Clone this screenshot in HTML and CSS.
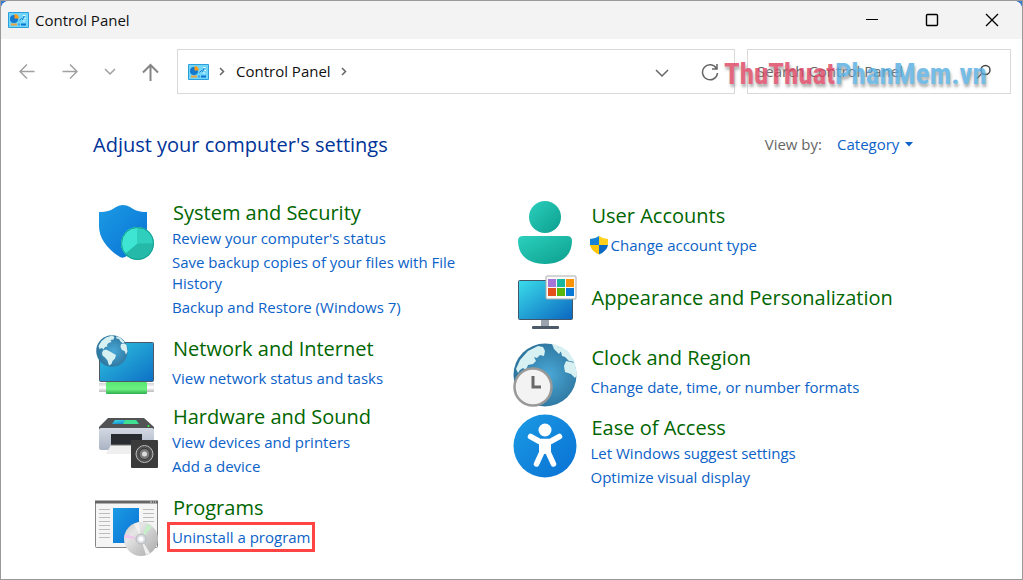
FILE: index.html
```html
<!DOCTYPE html>
<html lang="en">
<head>
<meta charset="utf-8">
<title>Control Panel</title>
<meta name="viewport" content="width=device-width, initial-scale=1">
<link rel="stylesheet" href="styles.css">
</head>
<body>
<svg class="defs" aria-hidden="true">
  <defs>
    <linearGradient id="blue" x1="0" y1="0" x2="1" y2="1"><stop offset="0" stop-color="#1c9be4"/><stop offset="1" stop-color="#0870d4"/></linearGradient>
    <linearGradient id="screen" x1="0" y1="0" x2="1" y2="1"><stop offset="0" stop-color="#3addea"/><stop offset="1" stop-color="#0b66c0"/></linearGradient>
    <linearGradient id="netscreen" x1="0" y1="0" x2="1" y2="1"><stop offset="0" stop-color="#31c6df"/><stop offset="1" stop-color="#0d70c6"/></linearGradient>
    <linearGradient id="teal" x1="0" y1="0" x2="1" y2="1"><stop offset="0" stop-color="#2bd0bd"/><stop offset="1" stop-color="#0c9e8e"/></linearGradient>
    <linearGradient id="cable" x1="0" y1="0" x2="0" y2="1"><stop offset="0" stop-color="#58e873"/><stop offset=".6" stop-color="#6cf080"/><stop offset="1" stop-color="#2fae4c"/></linearGradient>
    <linearGradient id="plug" x1="0" y1="0" x2="0" y2="1"><stop offset="0" stop-color="#d0d2d5"/><stop offset=".5" stop-color="#fff"/><stop offset="1" stop-color="#bbb"/></linearGradient>
    <linearGradient id="body" x1="0" y1="0" x2="0" y2="1"><stop offset="0" stop-color="#d4dae4"/><stop offset="1" stop-color="#aab3c3"/></linearGradient>
    <linearGradient id="disc" x1="0" y1="0" x2="1" y2="1"><stop offset="0" stop-color="#bfc0c1"/><stop offset=".3" stop-color="#e6e6e6"/><stop offset=".6" stop-color="#c9c9c9"/><stop offset="1" stop-color="#a9a9a9"/></linearGradient>
    <radialGradient id="ocean" cx=".55" cy=".5" r=".6"><stop offset="0" stop-color="#4aa8d6"/><stop offset="1" stop-color="#2a6f98"/></radialGradient>
    <symbol id="cp" viewBox="0 0 21 16">
      <rect width="21" height="16" rx="1" fill="#2b9fdb"/><rect x="1" y="1" width="19" height="14" fill="#72d5fa"/>
      <circle cx="6" cy="7" r="4" fill="#1279cf"/><path d="M6.500 6.500V2a4.500 4.500 0 0 1 4.300 4.500z" fill="#ff9d18"/>
      <path d="M11.500 8.500l2-2 1 1 2-4" fill="none" stroke="#1279cf"/><path d="M15 3.500h2.500m-1 3H18m-3 2.500h2" stroke="#e9f8ff"/>
      <path d="M3 12.500h6" stroke="#e9a23d" stroke-width="2"/><path d="M10.500 12.500h1m1.500 0h5" stroke="#0874d1" stroke-width="2"/>
    </symbol>
  </defs>
</svg>
<div class="window">
  <header class="titlebar">
    <svg class="app-icon" aria-hidden="true"><use href="#cp"/></svg>
    <span class="window-title">Control Panel</span>
    <div class="captions">
      <button aria-label="Minimize"><svg width="14" height="14"><path d="M1 6.500h12" stroke="#000" stroke-width="1"/></svg></button>
      <button aria-label="Maximize"><svg width="14" height="14" fill="none"><rect x="1.500" y="1.500" width="11" height="11" rx="1" stroke="#000" stroke-width="1.400"/></svg></button>
      <button aria-label="Close"><svg width="14" height="14"><path d="M1 1l12 12M13 1L1 13" stroke="#000" stroke-width="1.300"/></svg></button>
    </div>
  </header>

  <div class="toolbar">
    <nav class="history" aria-label="History">
      <button aria-label="Back"><svg width="18" height="18"><path d="M15.500 8.500H1m7-7l-7 7 7 7" stroke="#a0a0a0"/></svg></button>
      <button aria-label="Forward"><svg width="18" height="18"><path d="M2.500 8.500H17m-7-7l7 7-7 7" stroke="#a0a0a0"/></svg></button>
      <button aria-label="Recent locations"><svg width="18" height="18"><path d="M4 6l5 5 5-5" stroke="#a0a0a0"/></svg></button>
      <button aria-label="Up"><svg width="18" height="18"><path d="M8.500 18V2M1 9.500L8.500 2 16 9.500" stroke="#858585" stroke-width="2"/></svg></button>
    </nav>
    <div class="address">
      <svg class="app-icon" aria-hidden="true"><use href="#cp"/></svg>
      <svg class="crumb-arrow" viewBox="0 0 8 10"><path d="M2 1l3.500 3.500L2 8"/></svg>
      <a class="crumb" href="#">Control Panel</a>
      <svg class="crumb-arrow" viewBox="0 0 8 10"><path d="M2 1l3.500 3.500L2 8"/></svg>
      <div class="address-actions">
        <button aria-label="Previous locations"><svg width="18" height="18"><path d="M3 7l6 6 6-6" stroke="#666"/></svg></button>
        <button aria-label="Refresh"><svg width="18" height="18"><path d="M15.500 5.500A7.500 7.500 0 1 0 16.500 10M16 1v5h-5" stroke="#666"/></svg></button>
      </div>
    </div>
    <div class="search">
      <input type="search" aria-label="Search Control Panel" placeholder="Search Control Panel">
      <svg width="16" height="16" aria-hidden="true"><circle cx="9.500" cy="6" r="4.500"/><path d="M6 9.500L1 14.500"/></svg>
      <div class="watermark"><span>ThuThuat</span><span class="second">PhanMem.vn</span></div>
    </div>
  </div>

  <main>
    <div class="heading">
      <h1>Adjust your computer's settings</h1>
      <div class="view-by">
        <label for="view">View by:</label>
        <select id="view"><option>Category</option></select>
        <svg width="8" height="5" aria-hidden="true"><path d="M0 0h8L4 4.500z" fill="#0b62c8"/></svg>
      </div>
    </div>

    <div class="categories">
      <div class="column">
        <section class="category roomy">
          <svg class="icon" viewBox="0 0 64 64" aria-hidden="true">
            <path d="M5 13c8 0 13-2 17-5q7-4 14 0c4 3 9 5 17 5v18c0 12-10 21-22 27-2 1-3 1-5 0C13 50 5 39 5 27z" fill="url(#blue)"/>
            <circle cx="43.500" cy="44.500" r="16.500" fill="#24b9a8"/><path d="M43.500 44.500L31 55a16.500 16.500 0 0 1 12.500-27z" fill="#3ee5d2"/><path d="M43.500 44.500V28A16.500 16.500 0 0 1 60 44.500z" fill="#2fcebd"/><circle cx="43.500" cy="44.500" r="16" fill="none" stroke="#159f91"/>
          </svg>
          <div class="text">
            <h2><a href="#">System and Security</a></h2>
            <ul><li><a href="#">Review your computer's status</a></li><li><a href="#">Save backup copies of your files with File History</a></li><li><a href="#">Backup and Restore (Windows 7)</a></li></ul>
          </div>
        </section>
        <section class="category single">
          <svg class="icon" viewBox="0 0 64 64" aria-hidden="true">
            <rect x="5.500" y="8.500" width="54" height="39" rx="1" fill="url(#netscreen)" stroke="#505866"/>
            <rect x="5" y="49" width="55" height="9" fill="url(#plug)"/><rect x="12" y="48" width="41" height="12" rx="1" fill="url(#cable)"/>
            <svg x="2" y="1" width="32" height="32" viewBox="0 0 64 64">
              <circle cx="32" cy="32" r="31.500" fill="url(#ocean)"/>
              <path d="M5 22l6-10 9-7 12-4 5 3-2 5-6 1 2 4-6 2-3 4 1 3-5 1-3 5-3-3-5 2zM14 31l6-2 8 4 5 3 7 4-2 7-5 5-2 6-5 3-3-10-5-6-5-4-1-5zM40 3l8 2 9 9-3 3-5-4-3-5-5-1zM50 18l7-1 4 3 2 13-3 6-3-7-5-2-3-6z" fill="#d7f0f2"/>
            </svg>
          </svg>
          <div class="text"><h2><a href="#">Network and Internet</a></h2><ul><li><a href="#">View network status and tasks</a></li></ul></div>
        </section>
        <section class="category low roomy">
          <svg class="icon" viewBox="0 0 64 64" aria-hidden="true">
            <path d="M14 7h36l10 9v3H5v-3z" fill="#515355"/><path d="M21 9h21l3 4H18z" fill="url(#screen)"/><path d="M31 9h11l3 4H29z" fill="#40df91"/><circle cx="54.500" cy="15" r="1" fill="#3eff50"/>
            <rect x="5" y="17" width="55" height="22" rx="2" fill="url(#body)"/><rect x="17" y="23" width="31" height="16" fill="#292c31"/><path d="M17 34h28v9H12z" fill="#efefef"/><path d="M17 34h30" stroke="#777"/>
            <rect x="37" y="29" width="27" height="28" rx="1" fill="#3b3b3b"/><circle cx="50.500" cy="43" r="8.500" fill="#535353" stroke="#b8b8b8"/><circle cx="50.500" cy="43" r="5.500" fill="#7b7b7b" stroke="#333"/><circle cx="50.500" cy="43" r="2.500" fill="#ddd"/>
          </svg>
          <div class="text"><h2><a href="#">Hardware and Sound</a></h2><ul><li><a href="#">View devices and printers</a></li><li><a href="#">Add a device</a></li></ul></div>
        </section>
        <section class="category single">
          <svg class="icon" viewBox="0 0 64 64" aria-hidden="true">
            <rect x="1.500" y="8.500" width="62" height="46" rx="1" fill="#f5f5f5" stroke="#858585"/><path d="M1 9h63" stroke="#666" stroke-width="3"/><path d="M56 9h2m1 0h1m1 0h1" stroke="#ddd"/>
            <path d="M5 16.500h11M5 20.500h11M5 24.500h11M5 28.500h11M5 32.500h11M5 36.500h11M5 40.500h11M5 44.500h11M49 16.500h11M49 20.500h11M49 24.500h11M49 28.500h11" stroke="#bcbcbc"/>
            <rect x="19" y="15" width="26" height="35" fill="url(#blue)"/>
            <circle cx="47" cy="46" r="17" fill="url(#disc)"/><path d="M47 46L31 41l-1 4z" fill="#efc5ec"/><path d="M47 46l6-15 5 3z" fill="#c5efc9"/><path d="M47 46l-7-15 5-2zM47 46l5 16 4-2z" fill="#f0f0f0"/><circle cx="47" cy="46" r="5" fill="#d8dcdf" stroke="#b5b8ba"/><circle cx="47" cy="46" r="2.500" fill="#fff"/>
          </svg>
          <div class="text"><h2><a href="#">Programs</a></h2><ul><li><a class="marked" href="#">Uninstall a program</a></li></ul></div>
        </section>
      </div>

      <div class="column second-column">
        <section class="category single">
          <svg class="icon" viewBox="0 0 64 64" aria-hidden="true"><circle cx="32" cy="16" r="16" fill="url(#teal)"/><path d="M10 35h44q5 0 5 5c0 14-10 23-27 23S5 54 5 40q0-5 5-5z" fill="url(#teal)"/></svg>
          <div class="text"><h2><a href="#">User Accounts</a></h2><ul><li class="admin">
            <svg width="20" height="20" viewBox="0 0 20 20" aria-hidden="true"><path d="M10 0Q6 3 1 3v6h9z" fill="#1583d5"/><path d="M10 0q4 3 9 3v6h-9z" fill="#ffd11a"/><path d="M1 9h9v9.500Q2 15 1 9z" fill="#ffc60a"/><path d="M19 9h-9v9.500Q18 15 19 9z" fill="#0a69c5"/></svg>
            <a href="#">Change account type</a></li></ul></div>
        </section>
        <section class="category lone">
          <svg class="icon" viewBox="0 0 64 64" aria-hidden="true">
            <rect x="28" y="47" width="8" height="8" fill="#9aa3ae"/><rect x="19" y="54" width="27" height="3" rx="1" fill="#4c5968"/><rect x="5.500" y="8.500" width="54" height="39" rx="1" fill="url(#screen)" stroke="#44566a"/>
            <rect x="33" y="4" width="30" height="23" rx="1" fill="#fafafa" stroke="#aaa"/><path d="M35 7h8v8h-8z" fill="#a575d8"/><path d="M44 7h8v8h-8z" fill="#18b5a0"/><path d="M53 7h8v8h-8z" fill="#fa9308"/><path d="M35 16h8v8h-8z" fill="#e4501b"/><path d="M44 16h8v8h-8z" fill="#58b50c"/><path d="M53 16h8v8h-8z" fill="#0878d7"/>
          </svg>
          <div class="text"><h2><a href="#">Appearance and Personalization</a></h2></div>
        </section>
        <section class="category single">
          <svg class="icon" viewBox="0 0 64 64" aria-hidden="true">
            <circle cx="32" cy="32" r="31.500" fill="url(#ocean)"/>
            <path d="M3 26l4-9 8-9 10-5 5 1 2 4-1 5-4-1-3 3-3-1 2 4-3 3-5 1-2 5-3-2-3 2-2 3zM39 1l5 1 4 6-2 3-5-5zM47 3l8 5 7 11-6-1-4-4-3-1-1-4-4-3zM53 18l9 2 2 12-2 3-4-4-6-2-1-6z" fill="#d7f0f2"/>
            <circle cx="20" cy="44" r="18.500" fill="#f3f3f3" stroke="#999" stroke-width="2.500"/><path d="M20 33v11h8" fill="none" stroke="#686868" stroke-width="3"/>
          </svg>
          <div class="text"><h2><a href="#">Clock and Region</a></h2><ul><li><a href="#">Change date, time, or number formats</a></li></ul></div>
        </section>
        <section class="category">
          <svg class="icon" viewBox="0 0 64 64" aria-hidden="true"><circle cx="32" cy="32" r="31.500" fill="url(#blue)"/><circle cx="32" cy="16" r="6.500" fill="#fff"/><path d="M17.500 22.500l9 5h11l9-5M29 28v10l-5.500 12M35 28v10l5.500 12" fill="none" stroke="#fff" stroke-width="5.500" stroke-linecap="round" stroke-linejoin="round"/><path d="M26 25h12v14l-6 1-6-1z" fill="#fff"/></svg>
          <div class="text"><h2><a href="#">Ease of Access</a></h2><ul><li><a href="#">Let Windows suggest settings</a></li><li><a href="#">Optimize visual display</a></li></ul></div>
        </section>
      </div>
    </div>
  </main>
</div>
</body>
</html>
```
FILE: styles.css
```css
* { box-sizing: border-box; }
body { margin: 0; border: 1px solid #999; background: #3b78cf; font: 15px/21px "Open Sans", "Noto Sans", sans-serif; color: #111; }
.defs { position: absolute; width: 0; height: 0; }
.window { min-height: calc(100vh - 2px); background: #fff; border-radius: 8px 8px 0 0; overflow: hidden; }
button { border: 0; padding: 0; background: none; display: grid; place-items: center; }
button svg { fill: none; stroke-width: 1.5; }
a { color: #0b62c8; text-decoration: none; }

.titlebar { display: flex; align-items: center; height: 38px; padding-left: 7px; background: #f3f3f3; }
.app-icon { width: 21px; height: 16px; flex: none; }
.window-title { margin-left: 6px; }
.captions { display: flex; margin-left: auto; }
.captions button { width: 60px; height: 38px; }

.toolbar { display: flex; padding: 10px 11px 0 6px; }
.history { display: flex; align-items: center; width: 170px; }
.history button { width: 41px; height: 44px; }
.address { flex: 1; display: flex; align-items: center; height: 45px; padding: 0 15px 0 10px; border: 1px solid #d9d9d9; }
.crumb-arrow { width: 8px; height: 10px; margin: 0 10px 0 9px; fill: none; stroke: #666; stroke-width: 1.5; }
.crumb { color: #111; }
.address-actions { display: flex; gap: 30px; margin-left: auto; }
.search { position: relative; display: flex; align-items: center; width: 264px; height: 45px; margin-left: 12px; padding: 0 18px 0 9px; border: 1px solid #d9d9d9; }
.search input { flex: 1; min-width: 0; padding: 0; border: 0; outline: 0; background: none; font: inherit; }
.search input::placeholder { color: #666; }
.search svg { fill: none; stroke: #444; stroke-width: 1.5; }
.watermark { position: absolute; left: -24px; top: 6px; font: bold 29px/36px "Liberation Sans Narrow", "Roboto Condensed", "Open Sans Condensed", "Liberation Sans", sans-serif; color: #dc4260; opacity: .8; text-shadow: 1px 3px 3px #999; white-space: nowrap; pointer-events: none; }
.watermark .second { color: #53ade1; }

main { padding: 37px 109px 0 92px; }
.heading { display: flex; align-items: center; justify-content: space-between; height: 28px; }
h1 { margin: 0; font-size: 20px; line-height: 28px; font-weight: 400; color: #003399; }
.view-by { display: flex; align-items: center; height: 26px; margin-bottom: 2px; color: #666; }
.view-by select { margin: 0 5px 0 15px; padding: 0; border: 0; appearance: none; background: none; font: inherit; color: #0b62c8; }

.categories { display: grid; grid-template-columns: 1fr 1fr; gap: 18px; margin-top: 40px; padding-left: 1px; }
.category { display: flex; gap: 14px; margin-bottom: 5px; }
.category.roomy { margin-bottom: 16px; }
.second-column { padding-top: 2px; }
.second-column .category { margin-bottom: 7px; }
.category:last-child { margin-bottom: 0; }
.icon { width: 64px; height: 64px; flex: none; }
.low .icon { margin-top: 8px; }
.text { flex: 1; }
h2 { margin: 0; padding-left: 1px; font-size: 20px; line-height: 28px; font-weight: 400; }
h2 a { color: #006600; }
ul { margin: 1px 0 0; padding: 0; list-style: none; }
.single ul { margin-top: 5px; }
li + li { margin-top: 3px; }
.single .text { padding-top: 1px; }
.lone .text { padding-top: 12px; }
.admin { display: flex; align-items: center; gap: 2px; margin-left: -2px; }
.marked { outline: 3px solid #ff4444; outline-offset: 2px; }
```
